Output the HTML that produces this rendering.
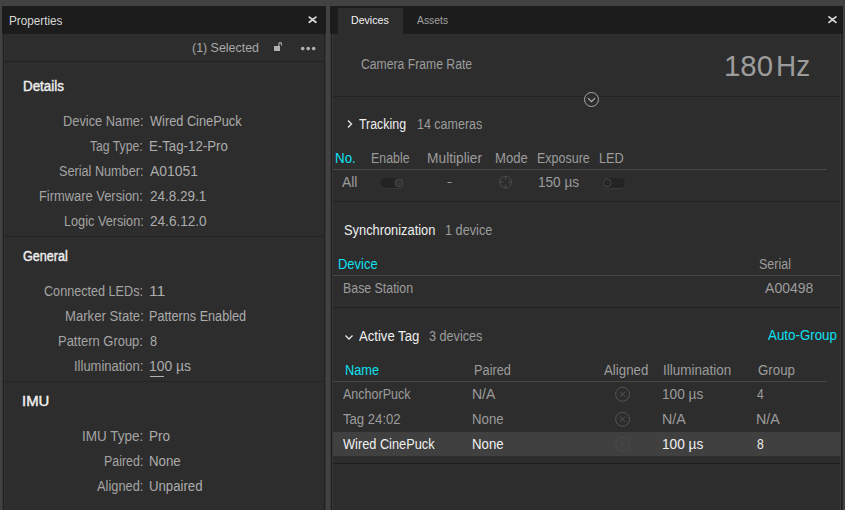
<!DOCTYPE html>
<html><head><meta charset="utf-8">
<style>
html,body{margin:0;padding:0}
body{width:845px;height:510px;position:relative;overflow:hidden;background:#424242;font-family:"Liberation Sans",sans-serif}
.r{position:absolute}
.t{position:absolute;white-space:pre;line-height:50px;transform-origin:0 0;font-family:"Liberation Sans",sans-serif}
</style></head><body>
<!-- left panel -->
<div class="r" style="left:2px;top:6px;width:324px;height:28px;background:#1c1c1c"></div>
<div class="r" style="left:2px;top:34px;width:1px;height:476px;background:#383838"></div>
<div class="r" style="left:3px;top:34px;width:1px;height:476px;background:#1f1f1f"></div>
<div class="r" style="left:4px;top:34px;width:1px;height:476px;background:#323232"></div>
<div class="r" style="left:5px;top:34px;width:319px;height:476px;background:#2d2d2d"></div>
<div class="r" style="left:324px;top:34px;width:1px;height:476px;background:#1f1f1f"></div>
<div class="r" style="left:325px;top:34px;width:1px;height:476px;background:#363636"></div>
<div class="r" style="left:330px;top:34px;width:1px;height:476px;background:#383838"></div>
<div class="r" style="left:4px;top:61px;width:320px;height:1px;background:#222"></div>
<div class="r" style="left:4px;top:236px;width:320px;height:1px;background:#242424"></div>
<div class="r" style="left:4px;top:381px;width:320px;height:1px;background:#242424"></div>
<!-- right panel -->
<div class="r" style="left:330px;top:6px;width:513px;height:28px;background:#1c1c1c"></div>
<div class="r" style="left:338px;top:8px;width:65px;height:26px;background:#2d2d2d"></div>
<div class="r" style="left:331px;top:34px;width:1px;height:476px;background:#1f1f1f"></div>
<div class="r" style="left:332px;top:34px;width:1px;height:476px;background:#383838"></div>
<div class="r" style="left:333px;top:34px;width:507px;height:476px;background:#2d2d2d"></div>
<div class="r" style="left:840px;top:34px;width:1px;height:476px;background:#3a3a3a"></div>
<div class="r" style="left:841px;top:34px;width:1px;height:476px;background:#1f1f1f"></div>
<div class="r" style="left:842px;top:34px;width:1px;height:476px;background:#2a2a2a"></div>
<div class="r" style="left:333px;top:96px;width:507px;height:1px;background:#222"></div>
<div class="r" style="left:333px;top:169px;width:494px;height:1px;background:#474747"></div>
<div class="r" style="left:333px;top:201px;width:507px;height:1px;background:#202020"></div>
<div class="r" style="left:333px;top:275px;width:507px;height:1px;background:#474747"></div>
<div class="r" style="left:333px;top:307px;width:507px;height:1px;background:#202020"></div>
<div class="r" style="left:333px;top:381px;width:494px;height:1px;background:#474747"></div>
<div class="r" style="left:333px;top:432px;width:508px;height:24px;background:#404040"></div>
<div class="r" style="left:333px;top:463px;width:507px;height:1px;background:#1e1e1e"></div>
<!-- icons -->
<svg class="r" style="left:0;top:0" width="845" height="510" viewBox="0 0 845 510">
 <!-- close X left -->
 <path d="M309.3 17.1 L315.9 22.3 M315.9 17.1 L309.3 22.3" stroke="#d8d8d8" stroke-width="1.8" stroke-linecap="round" fill="none"/>
 <!-- close X right -->
 <path d="M829 16.9 L835.9 22.4 M835.9 16.9 L829 22.4" stroke="#d8d8d8" stroke-width="1.8" stroke-linecap="round" fill="none"/>
 <!-- lock -->
 <rect x="274" y="46" width="6" height="5" fill="#b0b0b0"/>
 <path d="M278.9 46 V43.9 A1.3 1.3 0 0 1 281.5 43.9 V45.4" stroke="#b0b0b0" stroke-width="1.1" fill="none"/>
 <!-- dots -->
 <circle cx="302.7" cy="48.6" r="1.8" fill="#b0b0b0"/>
 <circle cx="308.2" cy="48.6" r="1.8" fill="#b0b0b0"/>
 <circle cx="313.7" cy="48.6" r="1.8" fill="#b0b0b0"/>
 <!-- underline illumination -->
 <rect x="150" y="376" width="14" height="1" fill="#b0b0b0"/>
 <!-- chevron circle -->
 <circle cx="591.5" cy="99.5" r="7" fill="#2d2d2d" stroke="#a8a8a8" stroke-width="1"/>
 <path d="M588 98.2 L591.5 101.7 L595 98.2" stroke="#b8b8b8" stroke-width="1.1" fill="none"/>
 <!-- tracking chevron > -->
 <path d="M348 120.5 L351.5 124 L348 127.5" stroke="#e8e8e8" stroke-width="1.3" fill="none"/>
 <!-- active tag chevron v -->
 <path d="M345.5 335.5 L349 339 L352.5 335.5" stroke="#e8e8e8" stroke-width="1.3" fill="none"/>
 <!-- toggles -->
 <rect x="380.2" y="178.5" width="23.6" height="10.2" rx="5.1" fill="none" stroke="#3a3a3a" stroke-width="1"/>
 <rect x="380.2" y="178" width="23.6" height="10" rx="5" fill="#232323"/>
 <circle cx="399" cy="183" r="4" fill="#343434" stroke="#474747" stroke-width="1"/>
 <rect x="601.2" y="178.5" width="23.8" height="10.2" rx="5.1" fill="none" stroke="#3a3a3a" stroke-width="1"/>
 <rect x="601.2" y="178" width="23.8" height="10" rx="5" fill="#232323"/>
 <circle cx="607" cy="182.8" r="4" fill="#262626" stroke="#474747" stroke-width="1"/>
 <!-- dash -->
 <rect x="447.5" y="182" width="4" height="1" fill="#a0a0a0"/>
 <!-- crosshair -->
 <g stroke="#4c4c4c" stroke-width="1" fill="none">
  <circle cx="505.5" cy="182.2" r="6"/>
  <path d="M505.5 176.2 V179.7 M505.5 184.7 V188.2 M499.5 182.2 H503 M508 182.2 H511.5"/>
 </g>
 <!-- circle-x icons -->
 <g stroke="#555" stroke-width="1" fill="none">
  <circle cx="622.6" cy="394.2" r="7"/>
  <path d="M620 391.6 L625.2 396.8 M625.2 391.6 L620 396.8"/>
  <circle cx="622.6" cy="419.3" r="7"/>
  <path d="M620 416.7 L625.2 421.9 M625.2 416.7 L620 421.9"/>
 </g>
 <g stroke="#4a4a4a" stroke-width="1" fill="none">
  <circle cx="622.6" cy="444.3" r="7"/>
  <path d="M620 441.7 L625.2 446.9 M625.2 441.7 L620 446.9"/>
 </g>
</svg>
<div class="t" style="left:8.66px;top:-4px;font-size:12.5px;font-weight:400;color:#d8d8d8;transform:scaleX(0.9375)">Properties</div>
<div class="t" style="left:192.48px;top:23px;font-size:13.5px;font-weight:400;color:#a8a8a8;transform:scaleX(0.9197)">(1) Selected</div>
<div class="t" style="left:22.55px;top:61px;font-size:14px;font-weight:400;color:#f0f0f0;-webkit-text-stroke:0.4px #f0f0f0;transform:scaleX(0.9548)">Details</div>
<div class="t" style="left:63.08px;top:96px;font-size:14px;font-weight:400;color:#a4a4a4;transform:scaleX(0.9163)">Device Name:</div>
<div class="t" style="left:150.30px;top:96px;font-size:14px;font-weight:400;color:#acacac;transform:scaleX(0.9120)">Wired CinePuck</div>
<div class="t" style="left:90.40px;top:121px;font-size:14px;font-weight:400;color:#a4a4a4;transform:scaleX(0.8700)">Tag Type:</div>
<div class="t" style="left:149.35px;top:121px;font-size:14px;font-weight:400;color:#acacac;transform:scaleX(0.9463)">E-Tag-12-Pro</div>
<div class="t" style="left:58.50px;top:146px;font-size:14px;font-weight:400;color:#a4a4a4;transform:scaleX(0.9043)">Serial Number:</div>
<div class="t" style="left:150.30px;top:146px;font-size:14px;font-weight:400;color:#acacac;transform:scaleX(0.9937)">A01051</div>
<div class="t" style="left:39.48px;top:171px;font-size:14px;font-weight:400;color:#a4a4a4;transform:scaleX(0.9207)">Firmware Version:</div>
<div class="t" style="left:150.30px;top:171px;font-size:14px;font-weight:400;color:#acacac;transform:scaleX(0.9655)">24.8.29.1</div>
<div class="t" style="left:63.69px;top:196px;font-size:14px;font-weight:400;color:#a4a4a4;transform:scaleX(0.9070)">Logic Version:</div>
<div class="t" style="left:150.30px;top:196px;font-size:14px;font-weight:400;color:#acacac;transform:scaleX(0.9707)">24.6.12.0</div>
<div class="t" style="left:23.00px;top:231px;font-size:14px;font-weight:400;color:#f0f0f0;-webkit-text-stroke:0.4px #f0f0f0;transform:scaleX(0.8980)">General</div>
<div class="t" style="left:44.30px;top:266px;font-size:14px;font-weight:400;color:#a4a4a4;transform:scaleX(0.9018)">Connected LEDs:</div>
<div class="t" style="left:149.18px;top:266px;font-size:14px;font-weight:400;color:#acacac;transform:scaleX(1.1231)">11</div>
<div class="t" style="left:64.76px;top:291px;font-size:14px;font-weight:400;color:#a4a4a4;transform:scaleX(0.9378)">Marker State:</div>
<div class="t" style="left:149.40px;top:291px;font-size:14px;font-weight:400;color:#acacac;transform:scaleX(0.9038)">Patterns Enabled</div>
<div class="t" style="left:58.48px;top:316px;font-size:14px;font-weight:400;color:#a4a4a4;transform:scaleX(0.9244)">Pattern Group:</div>
<div class="t" style="left:150.30px;top:316px;font-size:14px;font-weight:400;color:#acacac;transform:scaleX(0.9125)">8</div>
<div class="t" style="left:73.67px;top:341px;font-size:14px;font-weight:400;color:#a4a4a4;transform:scaleX(0.9274)">Illumination:</div>
<div class="t" style="left:149.31px;top:341px;font-size:14px;font-weight:400;color:#acacac;transform:scaleX(0.9902)">100 µs</div>
<div class="t" style="left:22.14px;top:376px;font-size:14px;font-weight:400;color:#f0f0f0;-webkit-text-stroke:0.4px #f0f0f0;transform:scaleX(1.0625)">IMU</div>
<div class="t" style="left:81.84px;top:411px;font-size:14px;font-weight:400;color:#a4a4a4;transform:scaleX(0.9645)">IMU Type:</div>
<div class="t" style="left:149.33px;top:411px;font-size:14px;font-weight:400;color:#acacac;transform:scaleX(0.9667)">Pro</div>
<div class="t" style="left:103.51px;top:436px;font-size:14px;font-weight:400;color:#a4a4a4;transform:scaleX(0.8884)">Paired:</div>
<div class="t" style="left:149.35px;top:436px;font-size:14px;font-weight:400;color:#acacac;transform:scaleX(0.9469)">None</div>
<div class="t" style="left:96.80px;top:461px;font-size:14px;font-weight:400;color:#a4a4a4;transform:scaleX(0.9160)">Aligned:</div>
<div class="t" style="left:149.36px;top:461px;font-size:14px;font-weight:400;color:#acacac;transform:scaleX(0.9418)">Unpaired</div>
<div class="t" style="left:350.68px;top:-5px;font-size:11.5px;font-weight:400;color:#f2f2f2;transform:scaleX(0.9225)">Devices</div>
<div class="t" style="left:417.00px;top:-5px;font-size:11.5px;font-weight:400;color:#a0a0a0;transform:scaleX(0.9000)">Assets</div>
<div class="t" style="left:361.20px;top:39px;font-size:14px;font-weight:400;color:#9c9c9c;transform:scaleX(0.8709)">Camera Frame Rate</div>
<div class="t" style="left:724.21px;top:41px;font-size:29.5px;font-weight:400;color:#9c9c9c;transform:scaleX(0.9957)">180</div>
<div class="t" style="left:776.01px;top:41px;font-size:29.5px;font-weight:400;color:#9c9c9c;transform:scaleX(0.9455)">Hz</div>
<div class="t" style="left:359.40px;top:99px;font-size:14px;font-weight:400;color:#f0f0f0;transform:scaleX(0.8849)">Tracking</div>
<div class="t" style="left:417.01px;top:99px;font-size:14px;font-weight:400;color:#9c9c9c;transform:scaleX(0.8917)">14 cameras</div>
<div class="t" style="left:335.44px;top:133px;font-size:14px;font-weight:400;color:#0ce0f2;transform:scaleX(0.9550)">No.</div>
<div class="t" style="left:370.52px;top:133px;font-size:14px;font-weight:400;color:#9c9c9c;transform:scaleX(0.8833)">Enable</div>
<div class="t" style="left:427.42px;top:133px;font-size:14px;font-weight:400;color:#9c9c9c;transform:scaleX(0.9836)">Multiplier</div>
<div class="t" style="left:494.56px;top:133px;font-size:14px;font-weight:400;color:#9c9c9c;transform:scaleX(0.9353)">Mode</div>
<div class="t" style="left:536.91px;top:133px;font-size:14px;font-weight:400;color:#9c9c9c;transform:scaleX(0.8914)">Exposure</div>
<div class="t" style="left:598.79px;top:133px;font-size:14px;font-weight:400;color:#9c9c9c;transform:scaleX(0.9115)">LED</div>
<div class="t" style="left:342.00px;top:157px;font-size:14px;font-weight:400;color:#9c9c9c;transform:scaleX(0.9933)">All</div>
<div class="t" style="left:537.73px;top:157px;font-size:14px;font-weight:400;color:#9c9c9c;transform:scaleX(0.9707)">150 µs</div>
<div class="t" style="left:343.98px;top:205px;font-size:14px;font-weight:400;color:#f0f0f0;transform:scaleX(0.9173)">Synchronization</div>
<div class="t" style="left:444.99px;top:205px;font-size:14px;font-weight:400;color:#9c9c9c;transform:scaleX(0.9078)">1 device</div>
<div class="t" style="left:337.77px;top:239px;font-size:14px;font-weight:400;color:#0ce0f2;transform:scaleX(0.9262)">Device</div>
<div class="t" style="left:759.31px;top:239px;font-size:14px;font-weight:400;color:#9c9c9c;transform:scaleX(0.8941)">Serial</div>
<div class="t" style="left:342.72px;top:263px;font-size:14px;font-weight:400;color:#9c9c9c;transform:scaleX(0.8833)">Base Station</div>
<div class="t" style="left:765.10px;top:263px;font-size:14px;font-weight:400;color:#9c9c9c;transform:scaleX(1.0000)">A00498</div>
<div class="t" style="left:359.00px;top:311px;font-size:14px;font-weight:400;color:#f0f0f0;transform:scaleX(0.9359)">Active Tag</div>
<div class="t" style="left:429.10px;top:311px;font-size:14px;font-weight:400;color:#9c9c9c;transform:scaleX(0.9017)">3 devices</div>
<div class="t" style="left:767.50px;top:310px;font-size:14px;font-weight:400;color:#0ce0f2;transform:scaleX(0.9528)">Auto-Group</div>
<div class="t" style="left:344.59px;top:345px;font-size:14px;font-weight:400;color:#0ce0f2;transform:scaleX(0.9139)">Name</div>
<div class="t" style="left:473.59px;top:345px;font-size:14px;font-weight:400;color:#9c9c9c;transform:scaleX(0.9128)">Paired</div>
<div class="t" style="left:603.60px;top:345px;font-size:14px;font-weight:400;color:#9c9c9c;transform:scaleX(0.9500)">Aligned</div>
<div class="t" style="left:662.94px;top:345px;font-size:14px;font-weight:400;color:#9c9c9c;transform:scaleX(0.9623)">Illumination</div>
<div class="t" style="left:757.50px;top:345px;font-size:14px;font-weight:400;color:#9c9c9c;transform:scaleX(0.9513)">Group</div>
<div class="t" style="left:343.20px;top:369px;font-size:14px;font-weight:400;color:#9c9c9c;transform:scaleX(0.8947)">AnchorPuck</div>
<div class="t" style="left:472.00px;top:369px;font-size:14px;font-weight:400;color:#9c9c9c;transform:scaleX(1.0000)">N/A</div>
<div class="t" style="left:662.22px;top:369px;font-size:14px;font-weight:400;color:#9c9c9c;transform:scaleX(0.9756)">100 µs</div>
<div class="t" style="left:756.60px;top:369px;font-size:14px;font-weight:400;color:#9c9c9c;transform:scaleX(0.8625)">4</div>
<div class="t" style="left:343.20px;top:394px;font-size:14px;font-weight:400;color:#9c9c9c;transform:scaleX(0.9377)">Tag 24:02</div>
<div class="t" style="left:472.06px;top:394px;font-size:14px;font-weight:400;color:#9c9c9c;transform:scaleX(0.9437)">None</div>
<div class="t" style="left:662.18px;top:394px;font-size:14px;font-weight:400;color:#9c9c9c;transform:scaleX(1.0174)">N/A</div>
<div class="t" style="left:755.58px;top:394px;font-size:14px;font-weight:400;color:#9c9c9c;transform:scaleX(1.0217)">N/A</div>
<div class="t" style="left:343.20px;top:419px;font-size:14px;font-weight:400;color:#f0f0f0;transform:scaleX(0.9120)">Wired CinePuck</div>
<div class="t" style="left:472.06px;top:419px;font-size:14px;font-weight:400;color:#f0f0f0;transform:scaleX(0.9437)">None</div>
<div class="t" style="left:662.22px;top:419px;font-size:14px;font-weight:400;color:#f0f0f0;transform:scaleX(0.9756)">100 µs</div>
<div class="t" style="left:756.60px;top:419px;font-size:14px;font-weight:400;color:#f0f0f0;transform:scaleX(0.8625)">8</div>
</body></html>
